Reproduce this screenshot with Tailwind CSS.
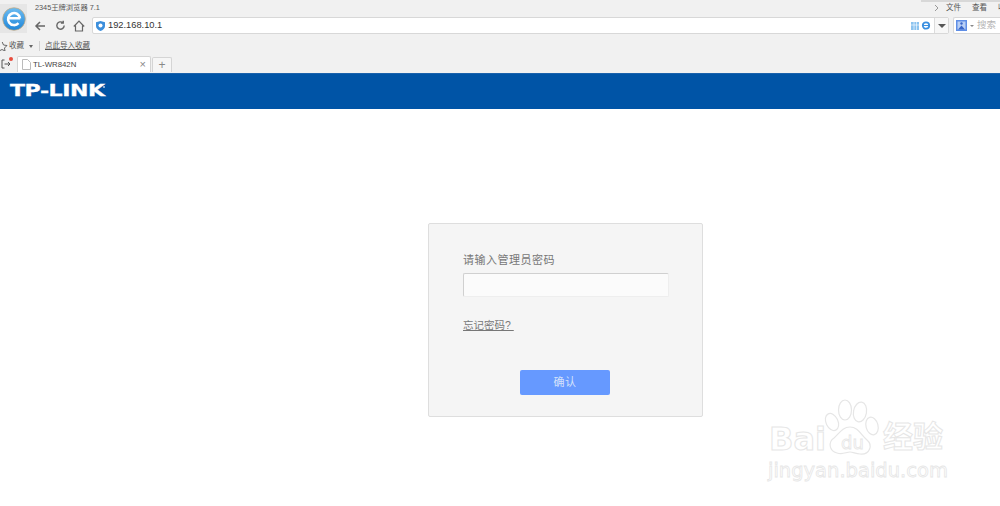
<!DOCTYPE html>
<html lang="zh">
<head>
<meta charset="utf-8">
<script src="https://cdn.jsdelivr.net/npm/@tailwindcss/browser@4"></script>
</head>
<body class="w-[1000px] h-[506px] overflow-hidden bg-white font-['Liberation_Sans','Noto_Sans_CJK_SC',sans-serif] relative">
<!-- browser chrome -->
<header class="h-[73px] bg-[#f1f1f1] relative flex flex-col">
  <div class="absolute left-[921px] top-0 w-[79px] h-[2px] bg-[#d8d8d8]"></div>
  <div class="h-[14px] flex items-center text-[7.500px] text-[#555] pl-[35px] pt-[2px] whitespace-nowrap">
    <span class="text-[7.300px]">2345王牌浏览器 7.1</span>
    <div class="ml-auto flex items-center w-[66px] text-[7.500px] -mt-[1px]">
      <svg class="w-[5px] h-[8px] mr-[7px] shrink-0" viewBox="0 0 5 8" fill="none" stroke="#999"><path d="M1 1l3 3-3 3"/></svg>
      <span class="w-[15px] mr-[11px] shrink-0">文件</span>
      <span class="w-[15px] mr-[11px] shrink-0">查看</span>
      <span class="w-[2px] overflow-hidden shrink-0">收藏</span>
    </div>
  </div>
  <div class="flex items-center h-[17px] mt-[3px]">
    <div class="w-[27px] h-[29px] -mt-[14px] bg-[#e6e6e6] flex items-center justify-center shrink-0">
      <svg class="w-[24px] h-[24px]" viewBox="0 0 24 24">
        <defs><linearGradient id="g" x1="0" y1="0" x2="0" y2="1"><stop offset="0" stop-color="#6cbcf2"/><stop offset="1" stop-color="#1f86d8"/></linearGradient></defs>
        <circle cx="12" cy="12" r="11.300" fill="url(#g)" stroke="#c9a87a" stroke-width=".7"/>
        <path d="M5.800 11.300h12.400M18 11.300a6 6 0 1 0-1.500 4.800" fill="none" stroke="#fff" stroke-width="2.600"/>
      </svg>
    </div>
    <svg class="w-[12px] h-[12px] ml-[7px] shrink-0" viewBox="0 0 12 12" fill="none" stroke="#666" stroke-width="1.500"><path d="M11 6H2M6 2L2 6l4 4"/></svg>
    <svg class="w-[11px] h-[11px] ml-[9px] shrink-0" viewBox="0 0 12 12" fill="none" stroke="#666" stroke-width="1.500"><path d="M10 6a4 4 0 1 1-1.400-3M9 .8V3.400H6.400"/></svg>
    <svg class="w-[12px] h-[12px] ml-[7px] shrink-0" viewBox="0 0 12 12" fill="none" stroke="#666" stroke-width="1.200"><path d="M.8 6.500L6 1.200l5.200 5.300M2.500 5.500V11h7V5.500"/></svg>
    <div class="ml-[7px] w-[857px] h-[17px] bg-white border border-[#d8d8d8] rounded-[2px] flex items-center shrink-0">
      <svg class="w-[9px] h-[10px] ml-[3px]" viewBox="0 0 9 10"><path d="M4.500 0L9 1.300V5c0 2.500-2 4-4.500 5C2 9 0 7.500 0 5V1.300z" fill="#3c8fdc"/><circle cx="4.500" cy="4.500" r="2" fill="#fff"/></svg>
      <span class="ml-[3px] text-[9.300px] leading-none text-[#333]">192.168.10.1</span>
      <div class="ml-auto flex items-center h-full">
        <svg class="w-[8px] h-[8px]" viewBox="0 0 8 8"><path fill="#8cc3ef" d="M0 0h8v8H0z"/><path stroke="#fff" stroke-width=".6" d="M3 0v8M5.500 0v8M0 3h8"/></svg>
        <svg class="w-[10px] h-[9px] ml-[2px] mr-[3px]" viewBox="0 0 10 9"><circle cx="5" cy="4.500" r="3.200" fill="none" stroke="#3a8fe0" stroke-width="1.800"/><path d="M2 4.500h6" stroke="#3a8fe0"/></svg>
        <div class="w-[14px] h-full border-l border-[#dcdcdc] bg-[#f7f7f7] flex items-center justify-center">
          <div class="w-0 h-0 border-x-[4px] border-x-transparent border-t-[4px] border-t-[#555]"></div>
        </div>
      </div>
    </div>
    <div class="ml-[4px] flex-1 h-[17px] bg-white border border-[#d8d8d8] border-r-0 rounded-l-[2px] flex items-center pl-[2px]">
      <svg class="w-[11px] h-[11px]" viewBox="0 0 11 11"><path d="M0 0h11v11H0z" fill="#5f8ee6"/><path d="M1.500 1.500h8v8h-8z" fill="#b9cff5"/><path d="M2 9.500l3.500-4 3.500 4z" fill="#3a66c8"/><circle cx="5.500" cy="3.500" r="1.200" fill="#3a66c8"/></svg>
      <div class="ml-[3px] w-0 h-0 border-x-[2px] border-x-transparent border-t-[2px] border-t-[#888]"></div>
      <span class="ml-[3px] text-[9.500px] text-[#b5b5b5]">搜索</span>
    </div>
  </div>
  <div class="flex items-center h-[14px] mt-[5px] text-[7.500px] text-[#555]">
    <svg class="w-[8px] h-[9px] shrink-0" viewBox="0 0 8 9" fill="none" stroke="#666"><path d="M2-.5L3.500 3 7 3.500 4.500 6 5 9 2 7.500-1 9"/></svg>
    <span class="ml-[1px]">收藏</span>
    <div class="ml-[5px] w-0 h-0 border-x-[2.500px] border-x-transparent border-t-[3px] border-t-[#666]"></div>
    <div class="ml-[6px] w-px h-[10px] bg-[#d0d0d0]"></div>
    <span class="ml-[5px] underline">点此导入收藏</span>
  </div>
  <div class="flex items-end h-[17px] mt-[2px] relative">
    <svg class="w-[10px] h-[10px] mb-[3px] ml-[1px] shrink-0" viewBox="0 0 10 10" fill="none" stroke="#555"><path d="M3.500 1H1v8h2.500M3.500 5H9M7 3l2 2-2 2"/></svg>
    <div class="absolute left-[9px] top-[2px] w-[4px] h-[4px] rounded-full bg-[#e84c3d]"></div>
    <div class="ml-[6px] w-[134px] h-[16px] bg-white border border-b-0 border-[#d5d5d5] rounded-t-[2px] flex items-center shrink-0">
      <svg class="w-[9px] h-[11px] ml-[4px]" viewBox="0 0 9 11" fill="none" stroke="#bbb"><path d="M.5.500h5l3 3v7h-8z"/></svg>
      <span class="ml-[2px] text-[7.800px] text-[#444]">TL-WR842N</span>
      <span class="ml-auto mr-[4px] text-[11px] leading-none text-[#888]">×</span>
    </div>
    <div class="w-[20px] h-[15px] ml-px bg-[#f6f6f6] border border-b-0 border-[#d5d5d5] rounded-t-[2px] flex items-center justify-center text-[12px] leading-none text-[#888] shrink-0">+</div>
  </div>
</header>
<!-- TP-LINK bar -->
<div class="h-[36px] bg-[#0054a6] flex items-center pl-[10px] pt-[1px] border-t border-[#1a62ac] relative">
  <span class="text-[15.500px] leading-none font-bold text-white [-webkit-text-stroke:0.3px_#fff] tracking-[-0.3px] [transform:scaleX(1.420)] origin-left font-['DejaVu_Sans',sans-serif]">TP-LINK</span>
  <span class="absolute left-[103px] top-[12px] w-[2px] h-[2px] rounded-full bg-white/70"></span>
</div>
<!-- login card -->
<main class="absolute left-[428px] top-[223px] w-[275px] h-[194px] bg-[#f5f5f5] border border-[#dedede] rounded-[2px] pl-[34px]">
  <p class="mt-[29px] text-[11px] leading-[14px] text-[#777] tracking-[0.5px]">请输入管理员密码</p>
  <div class="mt-[6px] w-[206px] h-[24px] bg-[#fbfbfb] border border-[#d0d0d0] border-b-[#eee] border-r-[#eee] rounded-[2px]"></div>
  <p class="mt-[21px] text-[10.500px] leading-[14px] text-[#777] underline whitespace-pre">忘记密码? </p>
  <button class="block mt-[38px] ml-[57px] w-[90px] h-[25px] bg-[#6699ff] rounded-[2px] text-[11px] tracking-[0.5px] text-[#d5e2fb]">确认</button>
</main>
<!-- watermark -->
<div class="absolute left-[767px] top-[398px] w-[180px] h-[90px] text-transparent [-webkit-text-stroke:1px_#e6e6e6]">
  <svg class="absolute left-[50px] top-[0px] w-[70px] h-[62px]" viewBox="0 0 70 62" fill="#fff" stroke="#e6e6e6" stroke-width="1.200">
    <ellipse cx="15" cy="24" rx="6" ry="9" transform="rotate(-25 15 24)"/>
    <ellipse cx="28" cy="12" rx="6.500" ry="10"/>
    <ellipse cx="43" cy="14" rx="6.500" ry="10" transform="rotate(10 43 14)"/>
    <ellipse cx="55" cy="28" rx="6" ry="9" transform="rotate(-15 55 28)"/>
    <path d="M33 29c8 0 11 8 17 13 6 5 3 15-7 14-4 0-7-2-10-2-4 0-7 3-13 1C12 53 11 44 17 40c5-4 8-11 16-11z"/>
  </svg>
  <span class="absolute left-[2px] top-[25px] text-[32px] leading-none font-bold font-['DejaVu_Sans',sans-serif]">Bai</span>
  <span class="absolute left-[74px] top-[36px] text-[18px] leading-none font-['DejaVu_Sans',sans-serif] [-webkit-text-stroke:0.8px_#e6e6e6]">du</span>
  <span class="absolute left-[116px] top-[24px] text-[30px] leading-none font-bold">经验</span>
  <span class="absolute left-[1px] top-[63px] text-[19.500px] leading-none font-['DejaVu_Sans',sans-serif] [-webkit-text-stroke:0.8px_#e6e6e6]">jingyan.baidu.com</span>
</div>
</body>
</html>
